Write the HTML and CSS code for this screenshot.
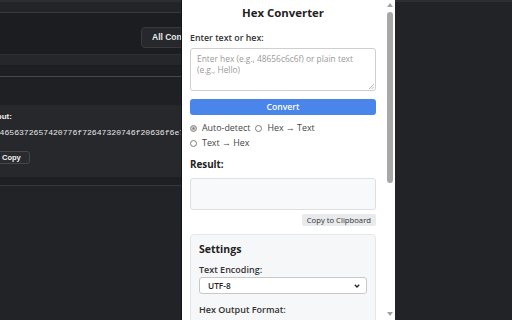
FILE: index.html
```html
<!DOCTYPE html>
<html>
<head>
<meta charset="utf-8">
<link rel="stylesheet" href="styles.css">
</head>
<body>
<div class="screen">
  <div class="page">
    <div class="topbar"></div>
    <div class="header"><span class="all-btn">All Conversions</span></div>
    <div class="band band1"></div>
    <div class="band band2"></div>
    <div class="band band3"></div>
    <div class="card">
      <div class="out-label">Output:</div>
      <div class="out-hex">2054656372657420776f72647320746f20636f6e76657274</div>
      <span class="copy-dark">Copy</span>
    </div>
    <div class="band band4"></div>
    <div class="rest"></div>
  </div>
  <div class="popup">
    <div class="popup-body">
      <h1 class="title">Hex Converter</h1>
      <div class="label">Enter text or hex:</div>
      <div class="textarea">Enter hex (e.g., 48656c6c6f) or plain text (e.g., Hello)
        <svg class="grip" width="5" height="5" viewBox="0 0 5 5"><path d="M0 5L5 0M2.5 5L5 2.5" stroke="#999" stroke-width="0.7"/></svg>
      </div>
      <div class="convert">Convert</div>
      <div class="radios">
        <label class="radio"><span class="dot checked"></span>Auto-detect</label>
        <label class="radio"><span class="dot"></span>Hex → Text</label>
        <label class="radio"><span class="dot"></span>Text → Hex</label>
      </div>
      <div class="result-label">Result:</div>
      <div class="result-box"></div>
      <div class="copy-row"><span class="copy-btn">Copy to Clipboard</span></div>
      <div class="settings">
        <div class="settings-title">Settings</div>
        <div class="field-label">Text Encoding:</div>
        <div class="select">UTF-8
          <svg class="chev" width="6" height="4" viewBox="0 0 6 4"><path d="M0.8 0.8L3 3L5.2 0.8" fill="none" stroke="#222" stroke-width="1.3"/></svg>
        </div>
        <div class="field-label second">Hex Output Format:</div>
        <div class="radios">
          <label class="radio"><span class="dot"></span>Lowercase</label>
          <label class="radio"><span class="dot"></span>Uppercase</label>
        </div>
      </div>
    </div>
    <div class="scrollbar">
      <svg class="arrow" width="6" height="4" viewBox="0 0 6 4"><path d="M0 4L3 0L6 4Z" fill="#a3a3a3"/></svg>
      <div class="thumb"></div>
      <div class="track-fill"></div>
      <svg class="arrow" width="6" height="4" viewBox="0 0 6 4"><path d="M0 0L6 0L3 4Z" fill="#a3a3a3"/></svg>
    </div>
  </div>
  <div class="right"></div>
</div>
</body>
</html>
```

FILE: styles.css
```css
* { box-sizing: border-box; margin: 0; padding: 0; }
html, body { width: 512px; height: 320px; overflow: hidden; }
body { background: #222326; font-family: "Open Sans", "Noto Sans", sans-serif; }

.screen { display: flex; width: 512px; height: 320px; }

/* left dark page */
.page { width: 181px; flex: none; display: flex; flex-direction: column; overflow: hidden; background: #222326; }
.topbar { height: 13px; flex: none; background: #232427; border-top: 2px solid #2d2e31; border-bottom: 1px solid #37383b; }
.header { height: 41px; flex: none; background: #1c1d20; padding: 10px 0 0 141px; }
.all-btn { display: inline-block; white-space: nowrap; height: 21px; line-height: 19px; padding: 0 10px 0 10px; border: 1px solid #38393d; border-radius: 4px; background: #27282c; color: #e8e8e8; font-weight: 700; font-size: 8.5px; font-family: "Liberation Sans", Arial, sans-serif; }
.band { flex: none; }
.band1 { height: 12px; background: #26272a; border-top: 1px solid #2f3033; border-bottom: 1px solid #1a1b1d; }
.band2 { height: 11px; background: #1e1f22; border-bottom: 1px solid #46474b; }
.band3 { height: 28px; background: #1f2023; }
.card { height: 72px; flex: none; background: #27282c; padding: 6px 0 0 0; margin-left: -17px; color: #ececec; }
.out-label { font-weight: 700; font-size: 8px; line-height: 12px; font-family: "Liberation Sans", Arial, sans-serif; }
.out-hex { margin-top: 4px; margin-left: 2px; font-family: "Liberation Mono", "DejaVu Sans Mono", monospace; font-size: 8.1px; line-height: 12px; white-space: nowrap; color: #e6e6e6; }
.copy-dark { display: inline-block; margin-top: 12px; height: 13px; line-height: 11px; padding: 0 8px 0 18px; border: 1px solid #45464a; border-radius: 3px; background: #2a2b2f; color: #f0f0f0; font-size: 7.5px; font-weight: 700; font-family: "Liberation Sans", Arial, sans-serif; }
.band4 { height: 9px; background: #1e1f22; border-bottom: 1px solid #36373a; }
.rest { flex: 1; background: #222326; }

/* popup */
.popup { width: 214px; flex: none; height: 320px; background: #ffffff; display: flex; border-left: 1px solid #141416; overflow: hidden; }
.popup-body { width: 202px; flex: none; padding: 5px 8px 0 8px; color: #222; }
.title { font-size: 11.4px; font-weight: 700; text-align: center; line-height: 16px; color: #222; }
.label { font-size: 8.8px; font-weight: 600; line-height: 12px; margin-top: 11px; color: #333; }
.textarea { position: relative; margin-top: 4px; height: 43px; border: 1px solid #cfcfcf; border-radius: 3px; padding: 4px 6px; font-size: 8.4px; line-height: 11px; color: #9a9a9a; }
.grip { position: absolute; right: 1px; bottom: 1px; }
.convert { margin-top: 8px; height: 16px; background: #4a85ec; border-radius: 3px; color: #fff; font-size: 8.6px; font-weight: 600; text-align: center; line-height: 16px; }
.radios { display: flex; flex-wrap: wrap; column-gap: 5px; row-gap: 3px; margin-top: 7px; }
.radio { display: flex; align-items: center; gap: 5px; font-size: 8.9px; line-height: 12px; color: #444; }
.dot { width: 7px; height: 7px; border-radius: 50%; border: 1px solid #7d7d7d; background: #fff; flex: none; }
.dot.checked { border-color: #9a9a9a; background: #7d7d7d; box-shadow: inset 0 0 0 1.3px #d8d8d8; }
.result-label { font-size: 9.8px; font-weight: 700; line-height: 12px; margin-top: 10px; color: #222; }
.result-box { margin-top: 7px; height: 32px; background: #f8f9fa; border: 1px solid #dedfe1; border-radius: 3px; }
.copy-row { display: flex; justify-content: flex-end; margin-top: 4px; }
.copy-btn { height: 12px; line-height: 12px; padding: 0 5px; background: #e9eaec; border-radius: 2px; font-size: 7.7px; color: #333; }
.settings { margin-top: 8px; background: #f6f7f8; border: 1px solid #e6e7e9; border-radius: 4px; padding: 7px 8px; height: 120px; }
.settings-title { font-size: 10.5px; font-weight: 700; line-height: 14px; color: #222; }
.field-label { font-size: 9px; font-weight: 600; line-height: 12px; margin-top: 8px; color: #333; }
.field-label.second { margin-top: 10px; }
.select { position: relative; margin-top: 1px; height: 17px; background: #fff; border: 1px solid #c8c8c8; border-radius: 3px; padding-left: 8px; font-size: 8.3px; line-height: 15px; font-weight: 600; color: #222; }
.chev { position: absolute; right: 6px; top: 6px; }

/* scrollbar */
.scrollbar { flex: 1; display: flex; flex-direction: column; align-items: center; padding: 3px 0 4px 0; background: #ffffff; }
.arrow { flex: none; }
.thumb { margin-top: 5px; width: 6px; height: 171px; background: #a8a8a8; border-radius: 3px; }
.track-fill { flex: 1; }

.right { flex: 1; background: #222326; border-top: 2px solid #2d2e31; }
```
